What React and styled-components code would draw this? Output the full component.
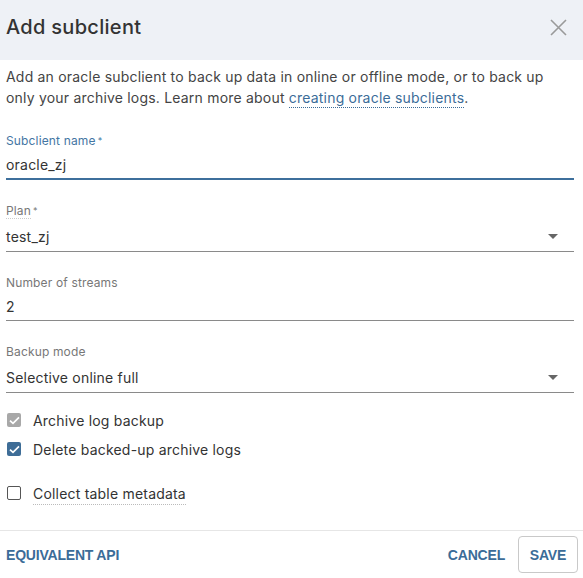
import React from "react";
import styled, { createGlobalStyle } from "styled-components";

const Global = createGlobalStyle`
  html, body { margin: 0; padding: 0; background: #fff; }
  body { font-family: Inter, "Open Sans", sans-serif; color: #333; }
  * { box-sizing: border-box; }
`;

const Dialog = styled.div`
  width: 583px;
  height: 578px;
  display: flex;
  flex-direction: column;
  background: #fff;
`;

const Header = styled.div`
  height: 60px;
  flex: none;
  display: flex;
  align-items: flex-start;
  justify-content: space-between;
  padding: 15px 16px 0 6px;
  background: #eef1f6;
`;

const Title = styled.h1`
  margin: 0;
  font-size: 20px;
  line-height: 25px;
  font-weight: 500;
  letter-spacing: 0.3px;
  color: #333;
`;

const CloseButton = styled.button`
  border: 0;
  background: none;
  padding: 0;
  margin-top: 4px;
  width: 17px;
  height: 17px;
  display: flex;
  align-items: center;
  justify-content: center;
  cursor: pointer;
`;

const Body = styled.div`
  flex: 1;
  display: flex;
  flex-direction: column;
  padding: 6px 9px 0 6px;
  font-size: 14px;
  letter-spacing: 0.2px;
`;

const Intro = styled.p`
  margin: 0 0 25px;
  line-height: 21px;
  color: #444;
`;

const Link = styled.a`
  color: #3b6c98;
  text-decoration: none;
  border-bottom: 1px dotted #3b6c98;
  padding-bottom: 1px;
`;

const Field = styled.div`
  display: flex;
  flex-direction: column;
  margin-bottom: ${(p) => p.$gap ?? 23}px;
`;

const Label = styled.label`
  font-size: 12px;
  line-height: 16px;
  letter-spacing: 0.15px;
  color: ${(p) => (p.$active ? "#4476a3" : "#777")};
  align-self: flex-start;
`;

const Hint = styled.span`
  border-bottom: 1px dotted #ccc;
`;

const Req = styled.span`
  font-size: 9px;
  vertical-align: top;
  margin-left: 2px;
`;

const Control = styled.div`
  display: flex;
  align-items: center;
  justify-content: space-between;
  height: ${(p) => (p.$select ? 31 : p.$active ? 29 : 28)}px;
  margin-top: 2px;
  padding-right: 16px;
  color: #333;
  border-bottom: ${(p) => (p.$active ? "2px solid #3d6f9c" : "1px solid #8a8a8a")};
`;

const Caret = styled.span`
  width: 0;
  height: 0;
  border-left: 5px solid transparent;
  border-right: 5px solid transparent;
  border-top: 5px solid #666;
`;

const Checks = styled.div`
  display: flex;
  flex-direction: column;
  padding-top: 16px;
`;

const CheckRow = styled.div`
  display: flex;
  align-items: center;
  gap: 12px;
  height: 22px;
  padding-left: 1px;
  margin-bottom: ${(p) => p.$gap ?? 7}px;
  color: #333;
`;

const Box = styled.span`
  width: 14px;
  height: 14px;
  flex: none;
  border-radius: 2px;
  display: flex;
  align-items: center;
  justify-content: center;
  background: ${(p) => (p.$state === "on" ? "#3e6d97" : p.$state === "locked" ? "#a8a8a8" : "#fff")};
  border: ${(p) => (p.$state === "off" ? "1.5px solid #555" : "none")};
`;

const CheckText = styled.span`
  ${(p) => (p.$hint ? "border-bottom: 1px dotted #bbb; padding-bottom: 2px; margin-top: 3px;" : "")}
`;

const Footer = styled.div`
  height: 48px;
  flex: none;
  margin-top: auto;
  border-top: 1px solid #e6e6e6;
  display: flex;
  align-items: center;
  padding: 0 5px 0 6px;
  font-family: "Liberation Sans", Arial, sans-serif;
`;

const TextButton = styled.button`
  border: 0;
  background: none;
  padding: 0;
  font: inherit;
  font-size: 14px;
  font-weight: 700;
  color: #3b6c98;
  letter-spacing: -0.2px;
  cursor: pointer;
`;

const Spacer = styled.div`
  flex: 1;
`;

const SaveButton = styled(TextButton)`
  margin-left: 13px;
  width: 60px;
  height: 37px;
  border: 1px solid #c9c9c9;
  border-radius: 4px;
  background: #fff;
`;

const Tick = () => (
  <svg width="11" height="9" viewBox="0 0 11 9">
    <path d="M1 4.6 L4 7.4 L10 1.4" fill="none" stroke="#fff" strokeWidth="1.7" />
  </svg>
);

export default function App() {
  return (
    <Dialog>
      <Global />
      <Header>
        <Title>Add subclient</Title>
        <CloseButton aria-label="Close">
          <svg width="17" height="17" viewBox="0 0 17 17">
            <path d="M1 1 L16 16 M16 1 L1 16" stroke="#9a9a9a" strokeWidth="1.6" fill="none" />
          </svg>
        </CloseButton>
      </Header>
      <Body>
        <Intro>
          Add an oracle subclient to back up data in online or offline mode, or to back up only your
          archive logs. Learn more about <Link href="#">creating oracle subclients</Link>.
        </Intro>
        <Field>
          <Label $active>
            Subclient name<Req>*</Req>
          </Label>
          <Control $active>oracle_zj</Control>
        </Field>
        <Field>
          <Label>
            <Hint>Plan</Hint>
            <Req>*</Req>
          </Label>
          <Control $select>
            test_zj
            <Caret />
          </Control>
        </Field>
        <Field>
          <Label>Number of streams</Label>
          <Control>2</Control>
        </Field>
        <Field $gap={0}>
          <Label>Backup mode</Label>
          <Control $select>
            Selective online full
            <Caret />
          </Control>
        </Field>
        <Checks>
          <CheckRow>
            <Box $state="locked">
              <Tick />
            </Box>
            <CheckText>Archive log backup</CheckText>
          </CheckRow>
          <CheckRow $gap={22}>
            <Box $state="on">
              <Tick />
            </Box>
            <CheckText>Delete backed-up archive logs</CheckText>
          </CheckRow>
          <CheckRow>
            <Box $state="off" />
            <CheckText $hint>Collect table metadata</CheckText>
          </CheckRow>
        </Checks>
      </Body>
      <Footer>
        <TextButton>EQUIVALENT API</TextButton>
        <Spacer />
        <TextButton>CANCEL</TextButton>
        <SaveButton>SAVE</SaveButton>
      </Footer>
    </Dialog>
  );
}
